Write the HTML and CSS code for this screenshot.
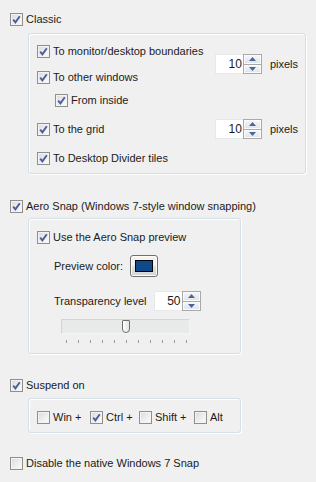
FILE: index.html
```html
<!DOCTYPE html>
<html lang="en">

<head>
  <meta charset="UTF-8">
  <title>Snap options</title>
  <link rel="stylesheet" href="styles.css">
</head>

<body>
  <div class="page">
    <label class="check"><span class="cb on"><svg viewBox="0 0 11 11"><path d="M2.2 5.6 L4.4 8.4 L8.8 2.2" /></svg></span>Classic</label>

    <div class="group group-classic">
      <label class="check r1"><span class="cb on"><svg viewBox="0 0 11 11"><path d="M2.2 5.6 L4.4 8.4 L8.8 2.2" /></svg></span>To monitor/desktop boundaries</label>
      <div class="spin-wrap s1">
        <div class="spin">
          <span class="spin-val">10</span>
          <span class="spin-btns">
            <span class="spin-btn"><svg viewBox="0 0 7 4"><path d="M0 4 L3.5 0 L7 4 Z" /></svg></span>
            <span class="spin-btn"><svg viewBox="0 0 7 4"><path d="M0 0 L3.5 4 L7 0 Z" /></svg></span>
          </span>
        </div>
        <span>pixels</span>
      </div>
      <label class="check r2"><span class="cb on"><svg viewBox="0 0 11 11"><path d="M2.2 5.6 L4.4 8.4 L8.8 2.2" /></svg></span>To other windows</label>
      <label class="check r3 sub"><span class="cb on"><svg viewBox="0 0 11 11"><path d="M2.2 5.6 L4.4 8.4 L8.8 2.2" /></svg></span>From inside</label>
      <label class="check r4"><span class="cb on"><svg viewBox="0 0 11 11"><path d="M2.2 5.6 L4.4 8.4 L8.8 2.2" /></svg></span>To the grid</label>
      <div class="spin-wrap s2">
        <div class="spin">
          <span class="spin-val">10</span>
          <span class="spin-btns">
            <span class="spin-btn"><svg viewBox="0 0 7 4"><path d="M0 4 L3.5 0 L7 4 Z" /></svg></span>
            <span class="spin-btn"><svg viewBox="0 0 7 4"><path d="M0 0 L3.5 4 L7 0 Z" /></svg></span>
          </span>
        </div>
        <span>pixels</span>
      </div>
      <label class="check r5"><span class="cb on"><svg viewBox="0 0 11 11"><path d="M2.2 5.6 L4.4 8.4 L8.8 2.2" /></svg></span>To Desktop Divider tiles</label>
    </div>

    <label class="check top-aero"><span class="cb on"><svg viewBox="0 0 11 11"><path d="M2.2 5.6 L4.4 8.4 L8.8 2.2" /></svg></span>Aero Snap (Windows 7-style window snapping)</label>

    <div class="group group-aero">
      <label class="check"><span class="cb on"><svg viewBox="0 0 11 11"><path d="M2.2 5.6 L4.4 8.4 L8.8 2.2" /></svg></span>Use the Aero Snap preview</label>
      <div class="field-row color-row">
        <span>Preview color:</span>
        <button class="color-btn" type="button"><span class="swatch"></span></button>
      </div>
      <div class="field-row level-row">
        <span>Transparency level</span>
        <div class="spin">
          <span class="spin-val">50</span>
          <span class="spin-btns">
            <span class="spin-btn"><svg viewBox="0 0 7 4"><path d="M0 4 L3.5 0 L7 4 Z" /></svg></span>
            <span class="spin-btn"><svg viewBox="0 0 7 4"><path d="M0 0 L3.5 4 L7 0 Z" /></svg></span>
          </span>
        </div>
      </div>
      <div class="slider">
        <div class="track"><span class="thumb"></span></div>
        <div class="ticks">
          <span></span><span></span><span></span><span></span><span></span><span></span>
          <span></span><span></span><span></span><span></span><span></span>
        </div>
      </div>
    </div>

    <label class="check top-suspend"><span class="cb on"><svg viewBox="0 0 11 11"><path d="M2.2 5.6 L4.4 8.4 L8.8 2.2" /></svg></span>Suspend on</label>

    <div class="group group-keys">
      <label class="check key-win"><span class="cb"></span>Win +</label>
      <label class="check key-ctrl"><span class="cb on"><svg viewBox="0 0 11 11"><path d="M2.2 5.6 L4.4 8.4 L8.8 2.2" /></svg></span>Ctrl +</label>
      <label class="check key-shift"><span class="cb"></span>Shift +</label>
      <label class="check"><span class="cb"></span>Alt</label>
    </div>

    <label class="check top-disable"><span class="cb"></span>Disable the native Windows 7 Snap</label>
  </div>
</body>

</html>
```

FILE: styles.css
```css
body {
  margin: 0;
  background-color: #f0f0f0;
  font-family: "Liberation Sans", Arial, sans-serif;
  font-size: 11px;
  color: #1b1b1b;
}

.page {
  padding: 13px 0 0 10px;
  display: flex;
  flex-direction: column;
  align-items: flex-start;
}

.check {
  display: flex;
  align-items: center;
  height: 13px;
  line-height: 13px;
  white-space: nowrap;
}

.cb {
  width: 13px;
  height: 13px;
  box-sizing: border-box;
  margin-right: 3px;
  border: 1px solid #8f8f8f;
  background: linear-gradient(135deg, #dadada, #f7f7f7 80%);
  box-shadow: inset 0 0 0 1px #f3f3f3;
  display: flex;
  flex-shrink: 0;
}

.cb svg {
  width: 11px;
  height: 11px;
}

.cb path {
  fill: none;
  stroke: #4a5f9c;
  stroke-width: 1.9;
}

/* group boxes */
.group {
  margin-left: 18px;
  box-sizing: border-box;
  border: 1px solid #d5dfe5;
  border-radius: 3px;
  box-shadow: inset 1px 1px 0 #fff, 1px 1px 0 #fff;
}

.group-classic {
  width: 278px;
  margin-top: 7px;
  padding: 4px 7px 5px 8px;
  display: grid;
  grid-template-columns: 1fr auto;
  grid-template-rows: 26px 26px 20px 38px 20px;
  align-items: center;
}

.r1 { grid-row: 1; grid-column: 1; }
.r2 { grid-row: 2; grid-column: 1; }
.r3 { grid-row: 3; grid-column: 1; }
.r4 { grid-row: 4; grid-column: 1; }
.r5 { grid-row: 5; grid-column: 1; }

.sub {
  margin-left: 18px;
}

.spin-wrap {
  display: flex;
  align-items: center;
  gap: 8px;
}

.s1 {
  grid-row: 1 / 3;
  grid-column: 2;
}

.s2 {
  grid-row: 4;
  grid-column: 2;
}

/* spinner */
.spin {
  display: flex;
  width: 47px;
  height: 20px;
  box-sizing: border-box;
  background-color: #fff;
  border: 1px solid #e6e9ec;
  border-right: none;
}

.spin-val {
  flex: 1;
  text-align: right;
  padding-right: 1px;
  font-size: 12px;
  line-height: 18px;
}

.spin-btns {
  width: 19px;
  margin-top: -1px;
  margin-bottom: -1px;
  display: flex;
  flex-direction: column;
  box-sizing: border-box;
  border: 1px solid #a9a9a9;
  background-color: #a9a9a9;
  gap: 1px;
}

.spin-btn {
  flex: 1;
  display: flex;
  align-items: center;
  justify-content: center;
  background: linear-gradient(#f6f7f9, #dfe3e8);
  box-shadow: inset 0 0 0 1px #fbfbfb;
}

.spin-btn svg {
  width: 7px;
  height: 4px;
}

.spin-btn path {
  fill: #4e639c;
}

/* aero snap */
.top-aero {
  margin-top: 26px;
}

.group-aero {
  width: 213px;
  margin-top: 5px;
  padding: 12px 8px 10px 8px;
  display: flex;
  flex-direction: column;
  align-items: flex-start;
}

.field-row {
  display: flex;
  align-items: center;
  gap: 7px;
  margin-left: 17px;
}

.color-row {
  margin-top: 11px;
}

.level-row {
  margin-top: 14px;
}

.color-btn {
  width: 28px;
  height: 22px;
  padding: 0;
  box-sizing: border-box;
  border: 1px solid #707070;
  border-radius: 3px;
  background: linear-gradient(#f3f3f3 45%, #e2e2e2 50%, #d4d4d4);
  box-shadow: inset 0 0 0 1px #fcfcfc;
  display: flex;
  align-items: center;
  justify-content: center;
}

.swatch {
  width: 18px;
  height: 12px;
  box-sizing: border-box;
  border: 1px solid #000;
  background-color: #0c4a8c;
}

.slider {
  margin-top: 8px;
  margin-left: 24px;
}

.track {
  position: relative;
  width: 129px;
  height: 15px;
  box-sizing: border-box;
  border: 1px solid #d2d4d6;
  border-right-color: #f4f4f4;
  border-bottom-color: #f4f4f4;
  background-color: #e8eaea;
}

.thumb {
  position: absolute;
  left: 60px;
  top: 0;
  width: 8px;
  height: 13px;
  box-sizing: border-box;
  border: 1px solid #6f6f6f;
  border-radius: 1px 1px 4px 4px;
  background: linear-gradient(to right, #ffffff, #e3e3e3);
}

.ticks {
  display: flex;
  justify-content: space-between;
  width: 121px;
  height: 3px;
  margin-top: 6px;
  margin-left: 5px;
}

.ticks span {
  width: 1px;
  height: 3px;
  background-color: #9c9c9c;
}

/* suspend */
.top-suspend {
  margin-top: 25px;
}

.group-keys {
  width: 213px;
  margin-top: 6px;
  padding: 12px 8px 8px 8px;
  display: flex;
}

.key-win {
  width: 53px;
}

.key-ctrl {
  width: 49px;
}

.key-shift {
  width: 55px;
}

.top-disable {
  margin-top: 24px;
}
```
